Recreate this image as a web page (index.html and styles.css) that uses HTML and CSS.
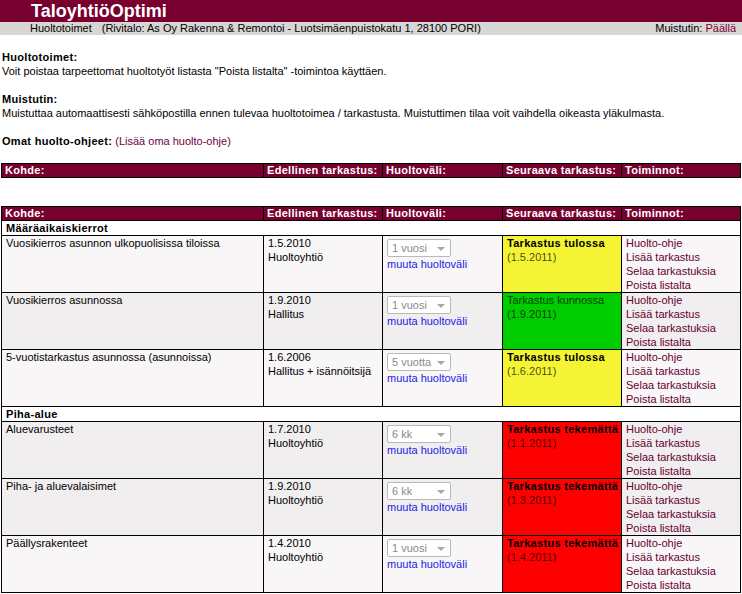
FILE: index.html
```html
<!DOCTYPE html>
<html lang="fi">
<head>
<meta charset="utf-8">
<title>TaloyhtiöOptimi</title>
<link rel="stylesheet" href="styles.css">
</head>
<body>
<header class="topbar">
  <div class="brand">TaloyhtiöOptimi</div>
  <div class="subbar">
    <div class="crumbs"><span>Huoltotoimet</span><span class="site">(Rivitalo: As Oy Rakenna &amp; Remontoi - Luotsimäenpuistokatu 1, 28100 PORI)</span></div>
    <div class="reminder">Muistutin: <a class="maroon" href="#">Päällä</a></div>
  </div>
</header>
<main class="content">
  <section class="info">
    <p><b>Huoltotoimet:</b><br>Voit poistaa tarpeettomat huoltotyöt listasta "Poista listalta" -toimintoa käyttäen.</p>
    <p><b>Muistutin:</b><br>Muistuttaa automaattisesti sähköpostilla ennen tulevaa huoltotoimea / tarkastusta. Muistuttimen tilaa voit vaihdella oikeasta yläkulmasta.</p>
    <p class="last"><b>Omat huolto-ohjeet:</b> <a class="add" href="#">(Lisää oma huolto-ohje)</a></p>
  </section>

  <table class="grid own">
    <colgroup><col class="c1"><col class="c2"><col class="c3"><col class="c4"><col class="c5"></colgroup>
    <thead>
      <tr><th>Kohde:</th><th>Edellinen tarkastus:</th><th>Huoltoväli:</th><th>Seuraava tarkastus:</th><th>Toiminnot:</th></tr>
    </thead>
  </table>

  <table class="grid">
    <colgroup><col class="c1"><col class="c2"><col class="c3"><col class="c4"><col class="c5"></colgroup>
    <thead>
      <tr><th>Kohde:</th><th>Edellinen tarkastus:</th><th>Huoltoväli:</th><th>Seuraava tarkastus:</th><th>Toiminnot:</th></tr>
    </thead>
    <tbody>
      <tr class="group"><td colspan="5">Määräaikaiskierrot</td></tr>
      <tr class="light">
        <td>Vuosikierros asunnon ulkopuolisissa tiloissa</td>
        <td>1.5.2010<br>Huoltoyhtiö</td>
        <td><span class="sel">1 vuosi<i class="arrow"></i></span><a class="change" href="#">muuta huoltoväli</a></td>
        <td class="status yellow"><b>Tarkastus tulossa</b><br><span class="date">(1.5.2011)</span></td>
        <td class="actions"><a href="#">Huolto-ohje</a><a href="#">Lisää tarkastus</a><a href="#">Selaa tarkastuksia</a><a href="#">Poista listalta</a></td>
      </tr>
      <tr class="dark">
        <td>Vuosikierros asunnossa</td>
        <td>1.9.2010<br>Hallitus</td>
        <td><span class="sel">1 vuosi<i class="arrow"></i></span><a class="change" href="#">muuta huoltoväli</a></td>
        <td class="status green"><span class="date">Tarkastus kunnossa</span><br><span class="date">(1.9.2011)</span></td>
        <td class="actions"><a href="#">Huolto-ohje</a><a href="#">Lisää tarkastus</a><a href="#">Selaa tarkastuksia</a><a href="#">Poista listalta</a></td>
      </tr>
      <tr class="light">
        <td>5-vuotistarkastus asunnossa (asunnoissa)</td>
        <td>1.6.2006<br>Hallitus + isännöitsijä</td>
        <td><span class="sel">5 vuotta<i class="arrow"></i></span><a class="change" href="#">muuta huoltoväli</a></td>
        <td class="status yellow"><b>Tarkastus tulossa</b><br><span class="date">(1.6.2011)</span></td>
        <td class="actions"><a href="#">Huolto-ohje</a><a href="#">Lisää tarkastus</a><a href="#">Selaa tarkastuksia</a><a href="#">Poista listalta</a></td>
      </tr>
      <tr class="group"><td colspan="5">Piha-alue</td></tr>
      <tr class="dark">
        <td>Aluevarusteet</td>
        <td>1.7.2010<br>Huoltoyhtiö</td>
        <td><span class="sel">6 kk<i class="arrow"></i></span><a class="change" href="#">muuta huoltoväli</a></td>
        <td class="status red"><b>Tarkastus tekemättä</b><br><span class="date">(1.1.2011)</span></td>
        <td class="actions"><a href="#">Huolto-ohje</a><a href="#">Lisää tarkastus</a><a href="#">Selaa tarkastuksia</a><a href="#">Poista listalta</a></td>
      </tr>
      <tr class="dark">
        <td>Piha- ja aluevalaisimet</td>
        <td>1.9.2010<br>Huoltoyhtiö</td>
        <td><span class="sel">6 kk<i class="arrow"></i></span><a class="change" href="#">muuta huoltoväli</a></td>
        <td class="status red"><b>Tarkastus tekemättä</b><br><span class="date">(1.3.2011)</span></td>
        <td class="actions"><a href="#">Huolto-ohje</a><a href="#">Lisää tarkastus</a><a href="#">Selaa tarkastuksia</a><a href="#">Poista listalta</a></td>
      </tr>
      <tr class="light">
        <td>Päällysrakenteet</td>
        <td>1.4.2010<br>Huoltoyhtiö</td>
        <td><span class="sel">1 vuosi<i class="arrow"></i></span><a class="change" href="#">muuta huoltoväli</a></td>
        <td class="status red"><b>Tarkastus tekemättä</b><br><span class="date">(1.4.2011)</span></td>
        <td class="actions"><a href="#">Huolto-ohje</a><a href="#">Lisää tarkastus</a><a href="#">Selaa tarkastuksia</a><a href="#">Poista listalta</a></td>
      </tr>
    </tbody>
  </table>
</main>
</body>
</html>
```
FILE: styles.css
```css
html, body {
  margin: 0;
  padding: 0;
  background: #ffffff;
}
body {
  font-family: "Liberation Sans", Arial, sans-serif;
  font-size: 11px;
  line-height: 14px;
  color: #000000;
}
a {
  text-decoration: none;
}
b {
  letter-spacing: 0.3px;
}

.brand {
  background: #77002f;
  color: #ffffff;
  font-weight: bold;
  font-size: 18px;
  height: 22px;
  line-height: 22px;
  padding-left: 31px;
}
.subbar {
  background: #d8d5d5;
  height: 13px;
  line-height: 13px;
  display: flex;
  justify-content: space-between;
  padding: 0 6px 0 30px;
}
.site {
  margin-left: 10px;
}
.maroon {
  color: #770033;
}

.content {
  padding: 15px 1px 0 1px;
}
.info p {
  margin: 0 0 14px;
  padding-left: 1px;
}
.info p.last {
  margin-bottom: 15px;
}
.add {
  color: #700045;
}

.grid {
  border-collapse: collapse;
  table-layout: fixed;
  width: 739px;
}
.grid.own {
  margin-bottom: 28px;
}
.c1 { width: 262px; }
.c2 { width: 119px; }
.c3 { width: 120px; }
.c4 { width: 119px; }
.c5 { width: 119px; }

.grid th {
  background: #77002f;
  color: #ffffff;
  font-weight: bold;
  letter-spacing: 0.3px;
  text-align: left;
  height: 13px;
  line-height: 13px;
  padding: 0 3px;
  border: 1px solid #000000;
  white-space: nowrap;
}
.grid td {
  border: 1px solid #000000;
  vertical-align: top;
  padding: 0 4px;
  line-height: 14px;
}
.grid tr.group td {
  background: #ffffff;
  font-weight: bold;
  letter-spacing: 0.3px;
  padding: 0 4px;
}
.grid tr.light td {
  background: #f8f6f7;
}
.grid tr.dark td {
  background: #f0eeee;
}

.sel {
  display: flex;
  align-items: center;
  justify-content: space-between;
  box-sizing: border-box;
  width: 64px;
  height: 18px;
  margin: 3px 0 0 0;
  padding: 0 5px 0 4px;
  border: 1px solid #b9b9b9;
  border-radius: 2px;
  background: #ffffff;
  color: #8a8a8a;
  font-size: 11px;
  white-space: nowrap;
}
.arrow {
  flex: none;
  width: 0;
  height: 0;
  margin-top: 2px;
  border-left: 4px solid transparent;
  border-right: 4px solid transparent;
  border-top: 4px solid #a8a8a8;
}
.change {
  display: block;
  color: #2222e6;
}

.grid tr td.status {
  white-space: nowrap;
  padding-left: 4px;
  padding-right: 0;
}
.grid tr td.yellow { background: #f4f434; }
.grid tr td.green { background: #00cc00; }
.grid tr td.red { background: #ff0000; }
.date {
  color: rgba(0, 0, 0, 0.72);
}

.actions a {
  display: block;
  color: #660033;
}
```
